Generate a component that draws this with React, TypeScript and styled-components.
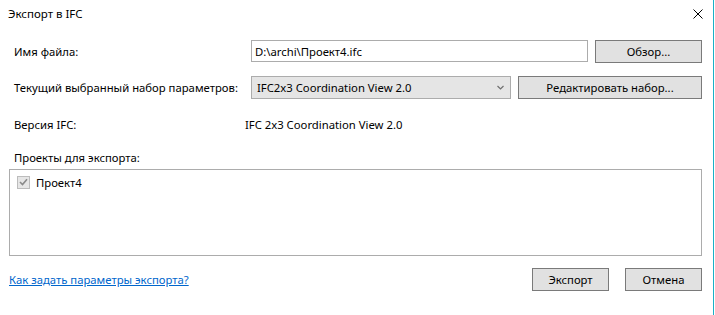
import React, { useState } from 'react'
import styled, { createGlobalStyle } from 'styled-components'

const colors = {
  text: '#000000',
  accent: '#1ab0c6',
  buttonBg: '#e1e1e1',
  buttonBorder: '#7a7a7a',
  fieldBorder: '#acacac',
  comboBg: '#e5e5e5',
  link: '#0066cc',
}

const GlobalStyle = createGlobalStyle`
  html, body {
    margin: 0;
    padding: 0;
    background: #ffffff;
  }
  body {
    font-family: 'Noto Sans', 'Open Sans', sans-serif;
    font-size: 11.3px;
    color: ${colors.text};
  }
`

const Window = styled.div`
  box-sizing: border-box;
  width: 714px;
  height: 315px;
  border-right: 1px solid ${colors.accent};
  display: flex;
  flex-direction: column;
  background: #ffffff;
`

const TitleBar = styled.header`
  height: 27px;
  display: flex;
  align-items: center;
  justify-content: space-between;
  padding: 0 10px 0 8px;
`

const Title = styled.span`
  font-size: 11.5px;
`

const CloseBtn = styled.button`
  border: none;
  background: none;
  padding: 0;
  width: 10px;
  height: 10px;
  display: flex;
  cursor: pointer;
`

const Body = styled.main`
  flex: 1;
  display: flex;
  flex-direction: column;
  padding: 0 11px 0 9px;
`

const Row = styled.div<{ $top: number }>`
  display: flex;
  align-items: center;
  margin-top: ${({ $top }) => $top}px;
  height: 22px;
`

const Label = styled.label<{ $width?: number }>`
  box-sizing: border-box;
  flex: 0 0 ${({ $width }) => $width ?? 242}px;
  padding-left: 5px;
  white-space: nowrap;
`

const TextInput = styled.input`
  box-sizing: border-box;
  flex: 1;
  height: 22px;
  border: 1px solid ${colors.fieldBorder};
  padding: 0 3px;
  font: inherit;
  color: ${colors.text};
  outline: none;
`

const Button = styled.button<{ $width: number }>`
  box-sizing: border-box;
  flex: 0 0 ${({ $width }) => $width}px;
  height: 23px;
  background: ${colors.buttonBg};
  border: 1px solid ${colors.buttonBorder};
  font: inherit;
  color: ${colors.text};
  padding: 0;
  cursor: pointer;
`

const Combo = styled.div`
  box-sizing: border-box;
  flex: 1;
  height: 23px;
  background: ${colors.comboBg};
  border: 1px solid ${colors.fieldBorder};
  display: flex;
  align-items: center;
  justify-content: space-between;
  padding: 0 6px 0 5px;
`

const Gap = styled.div<{ $w: number }>`
  flex: 0 0 ${({ $w }) => $w}px;
`

const Value = styled.span`
  padding-left: 0;
`

const Caption = styled.div`
  margin-top: 15px;
  padding-left: 5px;
  height: 16px;
  line-height: 16px;
`

const ListBox = styled.div`
  box-sizing: border-box;
  margin-top: 3px;
  height: 87px;
  border: 1px solid ${colors.fieldBorder};
  padding: 5px 7px;
`

const ListItem = styled.label`
  display: flex;
  align-items: center;
  gap: 6px;
  height: 14px;
`

const CheckBox = styled.span`
  box-sizing: border-box;
  width: 13px;
  height: 13px;
  border: 1px solid #bcbcbc;
  background: #e6e6e6;
  display: flex;
  align-items: center;
  justify-content: center;
`

const Footer = styled.footer`
  display: flex;
  align-items: center;
  margin-top: 12px;
  height: 23px;
`

const HelpLink = styled.a`
  flex: 1;
  color: ${colors.link};
  text-decoration: underline;
  cursor: pointer;
`

const FooterButtons = styled.div`
  display: flex;
  gap: 16px;
`

const Chevron = () => (
  <svg width="7" height="5" viewBox="0 0 7 5">
    <path d="M0.5 1 L3.5 4 L6.5 1" fill="none" stroke="#707070" strokeWidth="1.2" />
  </svg>
)

const CloseIcon = () => (
  <svg width="10" height="10" viewBox="0 0 10 10">
    <path d="M0.5 0.5 L9.5 9.5 M9.5 0.5 L0.5 9.5" stroke="#000" strokeWidth="1" />
  </svg>
)

const CheckMark = () => (
  <svg width="9" height="8" viewBox="0 0 9 8">
    <path d="M1 4 L3.5 6.5 L8 1.2" fill="none" stroke="#8a8a8a" strokeWidth="1.6" />
  </svg>
)

export default function App() {
  const [fileName, setFileName] = useState('D:\\archi\\Проект4.ifc')

  return (
    <>
      <GlobalStyle />
      <Window>
        <TitleBar>
          <Title>Экспорт в IFC</Title>
          <CloseBtn aria-label="Закрыть">
            <CloseIcon />
          </CloseBtn>
        </TitleBar>
        <Body>
          <Row $top={13}>
            <Label>Имя файла:</Label>
            <TextInput value={fileName} onChange={(e) => setFileName(e.target.value)} />
            <Gap $w={7} />
            <Button $width={107}>Обзор...</Button>
          </Row>
          <Row $top={14}>
            <Label>Текущий выбранный набор параметров:</Label>
            <Combo>
              <span>IFC2x3 Coordination View 2.0</span>
              <Chevron />
            </Combo>
            <Gap $w={7} />
            <Button $width={184}>Редактировать набор...</Button>
          </Row>
          <Row $top={15}>
            <Label $width={236}>Версия IFC:</Label>
            <Value>IFC 2x3 Coordination View 2.0</Value>
          </Row>
          <Caption>Проекты для экспорта:</Caption>
          <ListBox>
            <ListItem>
              <CheckBox>
                <CheckMark />
              </CheckBox>
              <span>Проект4</span>
            </ListItem>
          </ListBox>
          <Footer>
            <HelpLink>Как задать параметры экспорта?</HelpLink>
            <FooterButtons>
              <Button $width={77}>Экспорт</Button>
              <Button $width={77}>Отмена</Button>
            </FooterButtons>
          </Footer>
        </Body>
      </Window>
    </>
  )
}
